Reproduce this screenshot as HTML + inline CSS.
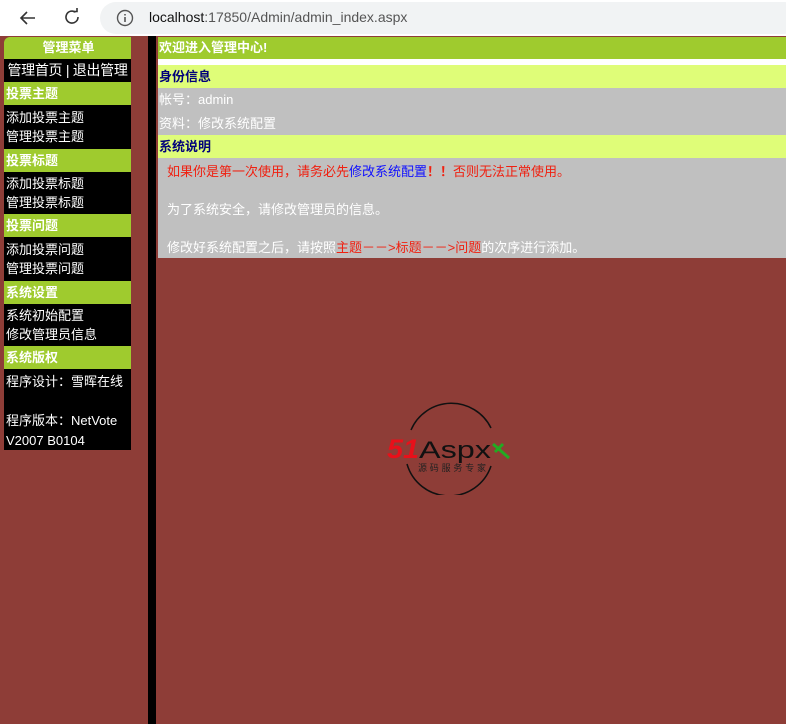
<!DOCTYPE html>
<html><head><meta charset="utf-8"><style>
*{margin:0;padding:0;box-sizing:border-box}
body{width:786px;height:724px;background:#8e3d37;font-family:"Liberation Sans","Noto Sans CJK SC",sans-serif;font-size:13px;position:relative;overflow:hidden}
.chrome{position:absolute;left:0;top:0;width:786px;height:36px;background:#fff}
.url{position:absolute;left:100px;top:2px;width:700px;height:32px;background:#f1f3f4;border-radius:16px}
.url span{position:absolute;left:49px;top:7px;font-size:14px;color:#555}
.url b{font-weight:normal;color:#111}
.abs{position:absolute}
.side{position:absolute;left:4px;top:37px;width:127px}
.g{background:#9fcb2e;color:#fff;height:23px;line-height:23px;padding-left:2px;font-weight:bold}
.k{background:#000;color:#fff;line-height:19px;padding:3px 2px}
.main{position:absolute;left:156px;top:36px;width:630px}
.row{height:23px;line-height:23px;padding-left:1px}
</style></head><body>
<div class="chrome">
<svg class="abs" style="left:18px;top:8px" width="20" height="20" viewBox="0 0 20 20"><path d="M17 10H3M9 4L3 10L9 16" stroke="#333" stroke-width="1.6" fill="none"/></svg>
<svg class="abs" style="left:62px;top:7px" width="20" height="20" viewBox="0 0 20 20"><path d="M16 10A6 6 0 1 1 13.5 5.2" stroke="#333" stroke-width="1.6" fill="none"/><path d="M11 4.5h4V1" stroke="#333" stroke-width="1.6" fill="none"/></svg>
<div class="url"><svg class="abs" style="left:16px;top:7px" width="18" height="18" viewBox="0 0 18 18"><circle cx="9" cy="9" r="7.5" stroke="#555" stroke-width="1.4" fill="none"/><path d="M9 8v5M9 5v1.5" stroke="#555" stroke-width="1.6"/></svg><span><b>localhost</b>:17850/Admin/admin_index.aspx</span></div>
</div>
<div class="side">
<div class="g" style="text-align:center;border-top-left-radius:6px;height:22px;line-height:22px">管理菜单</div>
<div class="k" style="text-align:center;height:23px;padding:2px 0;font-size:14px;letter-spacing:-0.3px">管理首页 | 退出管理</div>
<div class="g">投票主题</div>
<div class="k" style="height:44px">添加投票主题<br>管理投票主题</div>
<div class="g">投票标题</div>
<div class="k" style="height:42px;padding-top:2px">添加投票标题<br>管理投票标题</div>
<div class="g">投票问题</div>
<div class="k" style="height:44px">添加投票问题<br>管理投票问题</div>
<div class="g">系统设置</div>
<div class="k" style="height:42px;padding-top:2px">系统初始配置<br>修改管理员信息</div>
<div class="g">系统版权</div>
<div class="k" style="height:81px;line-height:19.5px">程序设计：雪晖在线<br><br>程序版本：NetVote V2007 B0104</div>
</div>
<div class="abs" style="left:148px;top:36px;width:8px;height:688px;background:#000"></div>
<div class="main">
<div style="border-left:2px solid #8e3d37;border-top:1px solid #8e3d37">
<div class="row" style="background:#9fcb2e;color:#fff;font-weight:bold;height:22px;line-height:22px">欢迎进入管理中心!</div>
<div style="background:#fff;height:6px"></div>
<div class="row" style="background:#dffd78;color:#00007a;font-weight:bold">身份信息</div>
<div style="background:#c0c0c0;color:#fff;height:47px;padding-left:1px;line-height:23.5px">帐号：admin<br>资料：修改系统配置</div>
<div class="row" style="background:#dffd78;color:#00007a;font-weight:bold">系统说明</div>
<div style="background:#c0c0c0;color:#fff;height:100px;padding:4px 0 0 9px;line-height:19px">
<div style="color:#f02010">如果你是第一次使用，请务必先<span style="color:#1010ff">修改系统配置</span><b>！！</b>否则无法正常使用。</div><br>
<div>为了系统安全，请修改管理员的信息。</div><br>
<div>修改好系统配置之后，请按照<span style="color:#f02010">主题－－&gt;标题－－&gt;问题</span>的次序进行添加。</div>
</div></div></div>
<svg class="abs" style="left:385px;top:400px" width="130" height="95" viewBox="0 0 130 95">
<path d="M26 30A44 44 0 0 1 106 28M106 66A44 44 0 0 1 22 64" stroke="#111" stroke-width="1.5" fill="none"/>
<text x="2" y="58" font-family="Liberation Sans" font-style="italic" font-weight="bold" font-size="27" fill="#e8101a" textLength="32" lengthAdjust="spacingAndGlyphs">51</text>
<text x="34" y="58" font-family="Liberation Sans" font-size="24" fill="#111" textLength="72" lengthAdjust="spacingAndGlyphs">Aspx</text>
<path d="M108 44l16 14M118 44l-8 8" stroke="#2a2" stroke-width="3"/>
<text x="33" y="71" font-family="Noto Sans CJK SC" font-size="9" fill="#222" textLength="68">源码服务专家</text>
</svg>
</body></html>
